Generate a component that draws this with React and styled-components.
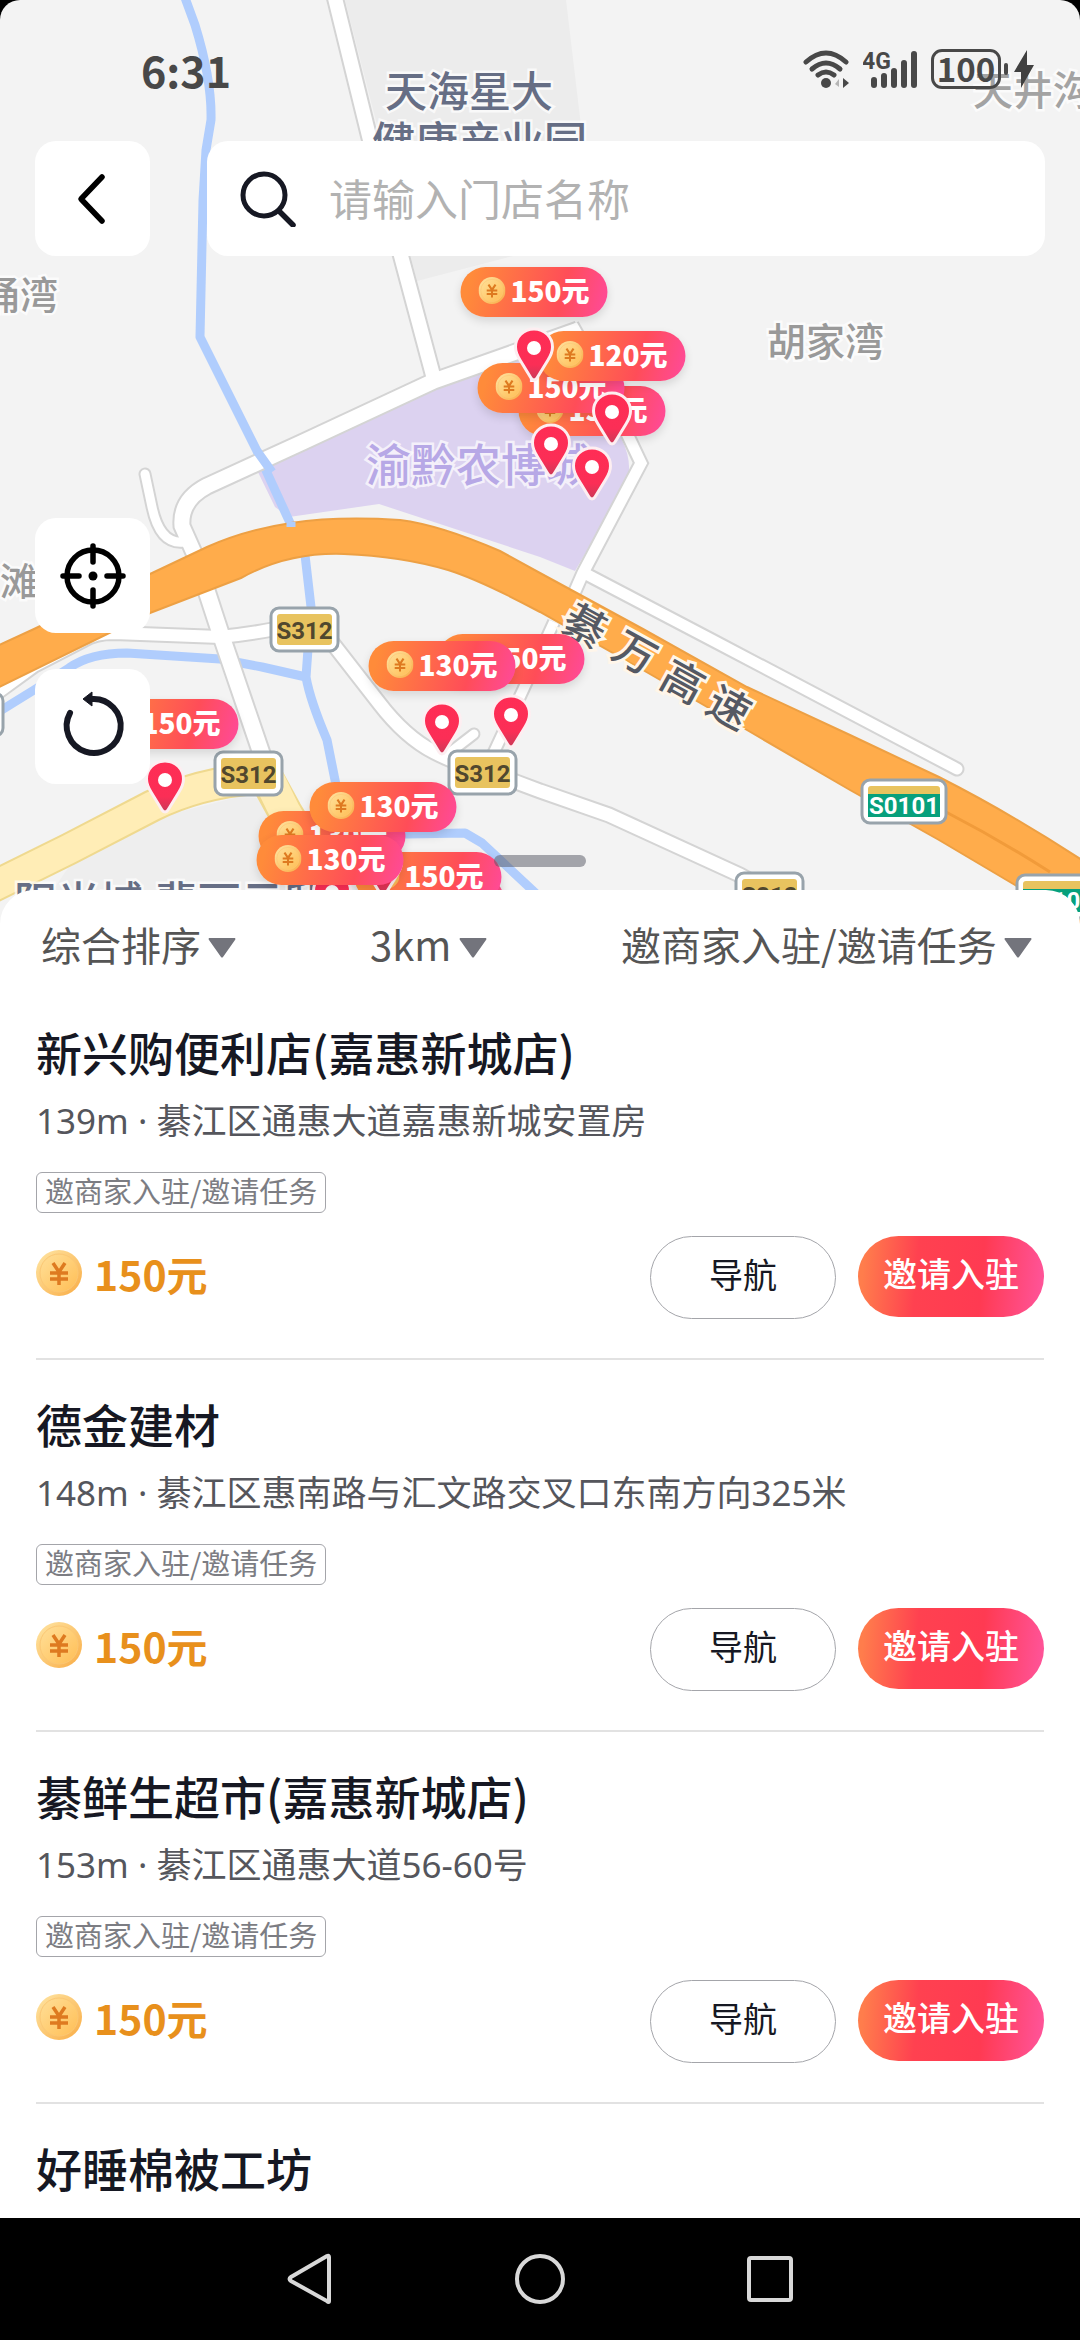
import { useState } from "react";
import styled, { createGlobalStyle } from "styled-components";

const GlobalStyle = createGlobalStyle`
  * {
    box-sizing: border-box;
  }
  body {
    margin: 0;
    background-color: black;
    font-family: "Noto Sans CJK SC", "Noto Sans", sans-serif;
  }
  button, input, select {
    font-family: inherit;
    padding: 0;
    margin: 0;
    border: none;
    background: none;
  }
  svg {
    display: block;
  }
`;

const Phone = styled.div`
  display: flex;
  flex-direction: column;
  height: 100vh;
  border-radius: 20px;
  overflow: hidden;
`;

/* ---------- map ---------- */

const MapArea = styled.section`
  position: relative;
  flex: none;
  height: 924px;
  background-color: #f3f3f3;
  overflow: hidden;
`;

const MapCanvas = styled.svg`
  position: absolute;
  inset: 0;
  width: 100%;
  height: 100%;
`;

const Marker = styled.button`
  position: absolute;
  left: calc(50% - 540px + ${(props) => props.$x}px);
  top: ${(props) => props.$y}px;
  transform: translateX(-50%);
  display: flex;
  flex-direction: column;
  align-items: center;
  gap: 10px;
  cursor: pointer;
`;

const Pill = styled.span`
  display: flex;
  align-items: center;
  justify-content: center;
  gap: 5px;
  width: 147px;
  height: 50px;
  padding-bottom: 4px;
  border-radius: 25px;
  color: white;
  font-size: 28px;
  line-height: 38px;
  font-weight: 900;
  background: linear-gradient(105deg, #ff8b3a 8%, #ff4d58 68%, #ff4a9c 100%);
  box-shadow: 0 4px 10px rgba(0, 0, 0, 0.12);
`;

const Overlay = styled.div`
  position: relative;
  display: flex;
  flex-direction: column;
  height: 890px;
  pointer-events: none;
`;

const StatusBar = styled.div`
  display: flex;
  align-items: center;
  justify-content: space-between;
  height: 141px;
  padding: 0 46px 4px 141px;
  color: #484848;
`;

const Time = styled.span`
  font-size: 43px;
  line-height: 60px;
  font-weight: 700;
`;

const StatusIcons = styled.div`
  display: flex;
  align-items: center;
  gap: 14px;
`;

const Battery = styled.span`
  width: 70px;
  height: 40px;
  border: 3px solid #484848;
  border-radius: 11px;
  font-size: 33px;
  line-height: 32px;
  font-weight: 700;
  text-align: center;
`;

const BatteryGroup = styled.div`
  display: flex;
  align-items: center;
  gap: 3px;
`;

const TopBar = styled.div`
  display: flex;
  gap: 57px;
  padding: 0 35px;
`;

const SquareButton = styled.button`
  flex: none;
  display: flex;
  align-items: center;
  justify-content: center;
  width: 115px;
  height: 115px;
  border-radius: 21px;
  background-color: white;
  cursor: pointer;
  pointer-events: auto;
`;

const SearchBox = styled.label`
  flex: 1;
  display: flex;
  align-items: center;
  gap: 33px;
  height: 115px;
  padding: 0 33px;
  border-radius: 21px;
  background-color: white;
  pointer-events: auto;
`;

const SearchInput = styled.input`
  flex: 1;
  min-width: 0;
  height: 64px;
  padding-bottom: 4px;
  outline: none;
  color: #161823;
  font-size: 43px;
  line-height: 60px;
  &::placeholder {
    color: #b2b2b2;
    opacity: 1;
  }
`;

const MapTools = styled.div`
  display: flex;
  flex-direction: column;
  gap: 36px;
  margin-top: 262px;
  padding-left: 35px;
`;

const Handle = styled.span`
  align-self: center;
  width: 92px;
  height: 12px;
  margin-top: auto;
  margin-bottom: 23px;
  border-radius: 6px;
  background-color: rgba(84, 86, 98, 0.5);
`;

/* ---------- list ---------- */

const Sheet = styled.main`
  position: relative;
  flex: 1;
  min-height: 0;
  margin-top: -34px;
  border-radius: 34px 34px 0 0;
  background-color: white;
  overflow: hidden;
`;

const Filters = styled.div`
  display: flex;
  align-items: center;
  justify-content: space-between;
  height: 98px;
  padding: 18px 48px 0 41px;
`;

const FilterLabel = styled.label`
  display: flex;
  align-items: center;
  gap: 7px;
`;

const FilterSelect = styled.select`
  appearance: none;
  padding-bottom: 8px;
  color: #555;
  font-size: 40px;
  line-height: 58px;
  cursor: pointer;
`;

const Stores = styled.ul`
  margin: 0;
  padding: 0 36px;
  list-style: none;
`;

const StoreItem = styled.li`
  padding: 36px 0 39px;
  border-bottom: 2px solid #e2e2e2;
`;

const StoreName = styled.h2`
  margin: 0;
  color: #161823;
  font-size: 46px;
  line-height: 54px;
  font-weight: 500;
`;

const StoreMeta = styled.p`
  margin: 21px 0 0;
  color: #55565c;
  font-family: "Noto Sans", "Noto Sans CJK SC", sans-serif;
  font-size: 35px;
  line-height: 44px;
`;

const Tag = styled.span`
  display: block;
  width: fit-content;
  height: 41px;
  margin-top: 29px;
  padding: 0 8px;
  border: 1px solid #a4a5aa;
  border-radius: 6px;
  color: #7c7d83;
  font-size: 29px;
  line-height: 34px;
`;

const StoreFooter = styled.div`
  display: flex;
  align-items: flex-start;
  gap: 22px;
  height: 83px;
  margin-top: 23px;
`;

const Price = styled.span`
  display: flex;
  align-items: center;
  gap: 12px;
  height: 74px;
  margin-right: auto;
  color: #e8901c;
  font-size: 41px;
  line-height: 58px;
  font-weight: 700;
`;

const ActionButton = styled.button`
  width: 186px;
  height: ${(props) => (props.$primary ? 81 : 83)}px;
  padding-bottom: 8px;
  border: ${(props) => (props.$primary ? "none" : "1px solid #a4a5aa")};
  border-radius: 42px;
  color: ${(props) => (props.$primary ? "white" : "#161823")};
  background: ${(props) =>
    props.$primary
      ? "linear-gradient(95deg, #ff7d4c 4%, #ff4150 32%, #ff3a52 66%, #ff559c 100%)"
      : "white"};
  font-size: 34px;
  line-height: 50px;
  font-weight: ${(props) => (props.$primary ? 500 : 400)};
  cursor: pointer;
`;

const NavBar = styled.nav`
  flex: none;
  display: flex;
  align-items: center;
  justify-content: center;
  gap: 176px;
  height: 122px;
  background-color: black;
`;

const NavButton = styled.button`
  width: 54px;
  height: 54px;
  cursor: pointer;
`;

/* ---------- icons ---------- */

const Coin = ({ size }) => (
  <svg width={size} height={size} viewBox="0 0 46 46">
    <defs>
      <linearGradient id="coinEdge" x1="0" y1="0" x2="1" y2="1">
        <stop offset="0" stopColor="#ffe6a4" />
        <stop offset="1" stopColor="#f9ac45" />
      </linearGradient>
      <linearGradient id="coinFace" x1="0" y1="0" x2="1" y2="1">
        <stop offset="0" stopColor="#ffdf98" />
        <stop offset="1" stopColor="#ffbe55" />
      </linearGradient>
    </defs>
    <circle cx="23" cy="23" r="23" fill="url(#coinEdge)" />
    <circle cx="23" cy="23" r="19" fill="url(#coinFace)" stroke="#fbc774" />
    <path
      d="M17 13l6 9 6-9M14 23h18M14 29h18M23 22v13"
      fill="none"
      stroke="#de7a20"
      strokeWidth="3.500"
    />
  </svg>
);

const PinIcon = () => (
  <svg width="41" height="56" viewBox="0 0 41 56">
    <defs>
      <linearGradient id="pin" x1="0" y1="0" x2="0" y2="1">
        <stop offset="0" stopColor="#ff2d55" />
        <stop offset="0.7" stopColor="#fb2e56" />
        <stop offset="1" stopColor="#c93a58" />
      </linearGradient>
    </defs>
    <path
      d="M20.500 2C10 2 2 10 2 20c0 5 2 9 4.500 13l11 18c1.500 2.500 4.500 2.500 6 0l11-18C37 29 39 25 39 20 39 10 31 2 20.500 2z"
      fill="url(#pin)"
      stroke="#fdeef1"
      strokeWidth="3"
    />
    <circle cx="20.500" cy="21" r="7" fill="white" />
  </svg>
);

const Triangle = () => (
  <svg width="28" height="22" viewBox="0 0 28 22">
    <path d="M1 1h26q1 1 0 2L15 20q-1 1-2 0L1 3q-1-1 0-2z" fill="#73747c" />
  </svg>
);

const BackIcon = () => (
  <svg width="32" height="54" viewBox="0 0 32 54">
    <path
      d="M25 5L4 27l21 22"
      fill="none"
      stroke="black"
      strokeWidth="5.500"
      strokeLinecap="round"
      strokeLinejoin="round"
    />
  </svg>
);

const SearchIcon = () => (
  <svg width="56" height="56" viewBox="0 0 56 56">
    <circle cx="24" cy="24" r="21" fill="none" stroke="#161823" strokeWidth="5" />
    <path d="M39 40l14 14" stroke="#161823" strokeWidth="5.500" strokeLinecap="round" />
  </svg>
);

const LocateIcon = () => (
  <svg width="68" height="68" viewBox="0 0 68 68">
    <g fill="none" stroke="black" strokeWidth="5.500" strokeLinecap="round">
      <circle cx="34" cy="34" r="26" />
      <path d="M34 4v16M34 48v16M4 34h16M48 34h16" />
    </g>
    <circle cx="34" cy="34" r="4.500" fill="black" />
  </svg>
);

const RefreshIcon = () => (
  <svg width="68" height="74" viewBox="0 0 68 74">
    <path
      d="M11 23a27 27 0 1 0 22-14"
      fill="none"
      stroke="#161823"
      strokeWidth="6"
      strokeLinecap="round"
    />
    <path d="M24 9l9-7v14z" fill="#161823" stroke="#161823" strokeLinejoin="round" />
  </svg>
);

const WifiIcon = () => (
  <svg width="46" height="38" viewBox="0 0 46 38">
    <g fill="none" stroke="#484848" strokeWidth="5" strokeLinecap="round">
      <path d="M3 12q20-18 40 0" />
      <path d="M9 19q14-12 28 0" />
      <path d="M15 25q8-6 16 0" />
    </g>
    <circle cx="23" cy="33" r="5" fill="#484848" />
    <path d="M40 28l6 5-6 5z" fill="#484848" />
    <path d="M36 29v8l-4-3z" fill="#b5b5b5" />
  </svg>
);

const SignalIcon = () => (
  <svg width="54" height="38" viewBox="0 0 54 38">
    <text x="-1" y="19" fontSize="23" fontWeight="700" fill="#484848" fontFamily="Roboto">
      4G
    </text>
    <path
      d="M11 30v5M21 26v9M31 21v14M41 13v22M51 4v31"
      stroke="#484848"
      strokeWidth="6"
      strokeLinecap="round"
    />
  </svg>
);

const BoltIcon = () => (
  <svg width="20" height="38" viewBox="0 0 20 38">
    <path d="M13 0v15h7L7 38V22H0z" fill="#404040" />
  </svg>
);

/* ---------- map drawing ---------- */

const whiteRoads = [
  { d: "M333-10L370 140 434 379", w: 14 },
  { d: "M578 330L434 381 303 442 207 486Q180 500 182 526L198 562", w: 15 },
  { d: "M145 474L152 507Q160 545 184 542", w: 9, round: true },
  { d: "M205 586L220 632 262 755", w: 16 },
  { d: "M-10 698L34 666 84 640Q95 633 114 633L220 637Q250 634 275 629L320 624", w: 12 },
  { d: "M330 640L379 703Q405 737 434 752T516 782L540 791 609 815 740 875 820 920", w: 13 },
  { d: "M474 734L448 754", w: 9, round: true },
  { d: "M554 622L523 690 488 765", w: 10 },
  { d: "M586 574L712 640 957 769", w: 11, round: true },
  { d: "M572 325L592 360 641 463 583 573 572 598", w: 11 },
];

const rivers = [
  "M184-5L195 25Q212 80 211 120L206 150 203 200 200 337 258 453 291 525",
  "M305 555L311 607 306 677Q310 700 327 740L337 790Q360 834 406 834L465 833 482 843 575 930",
  "M-5 714L34 690 69 668Q90 653 127 653L220 659 262 667 306 677",
];

const places = [
  { t: "天海星大", x: 385, y: 107, size: 42, color: "#666e85" },
  { t: "健康产业园", x: 372, y: 158, size: 43, color: "#666e85" },
  { t: "涌湾", x: -18, y: 309, size: 38, color: "#999" },
  { t: "滩", x: 0, y: 595, size: 38, color: "#999" },
  { t: "天井沟", x: 973, y: 105, size: 40, color: "#a3a3a3" },
  { t: "胡家湾", x: 767, y: 356, size: 39, color: "#999" },
  { t: "渝黔农博城", x: 366, y: 482, size: 45, color: "#b7a8e6" },
  { t: "阳光城·翡丽云邸", x: 14, y: 918, size: 43, color: "#666e85" },
];

const highwayName = [
  { t: "綦", x: 585, y: 626 },
  { t: "万", x: 635, y: 653 },
  { t: "高", x: 683, y: 682 },
  { t: "速", x: 729, y: 708 },
];

const Shield = ({ x, y, name, express }) => {
  const w = express ? 84 : 67;
  return (
    <g transform={`translate(${x} ${y})`}>
      <rect width={w} height="43" rx="8" fill="white" stroke="#98a3ab" strokeWidth="3" />
      <rect x="6" y="6" width={w - 12} height="31" rx="3" fill="#e8c35f" />
      {express && <path d={`M6 14h${w - 12}v23h-${w - 12}z`} fill="#07a07c" />}
      <text
        x={w / 2}
        y={express ? 34 : 31}
        textAnchor="middle"
        fontFamily="Roboto"
        fontSize="24"
        fontWeight="700"
        fill={express ? "white" : "#50472e"}
      >
        {name}
      </text>
    </g>
  );
};

const CityMap = () => (
  <MapCanvas viewBox="0 0 1080 924" preserveAspectRatio="xMidYMin slice">
    <path d="M345 0H566L594 235 417 281z" fill="#ececec" />
    <path d="M30 924L70 865 155 818 238 797 290 800 310 924z" fill="#eee" />
    <path
      d="M255 466L475 372 578 335 600 390 622 440Q632 460 628 480L575 571 540 557 379 504 289 517 275 507z"
      fill="#dcd2f0"
    />
    <g fill="none" stroke="#b0cdfd" strokeWidth="9" strokeLinejoin="round">
      {rivers.map((d) => (
        <path key={d} d={d} />
      ))}
    </g>
    <g fill="none">
      <path d="M262 770L285 812 320 870" stroke="#efd98f" strokeWidth="35" />
      <path d="M-20 893L69 849 152 806Q200 782 262 778" stroke="#efd98f" strokeWidth="33" />
      <path d="M262 765L285 812 320 870" stroke="#ffedb6" strokeWidth="31" />
      <path d="M-20 893L69 849 152 806Q200 782 262 778" stroke="#ffedb6" strokeWidth="29" />
    </g>
    <g fill="none">
      {whiteRoads.map((road) => (
        <path
          key={road.d}
          d={road.d}
          stroke="#d4d4d4"
          strokeWidth={road.w + 4}
          strokeLinecap={road.round ? "round" : "butt"}
        />
      ))}
      {whiteRoads.map((road) => (
        <path
          key={road.d}
          d={road.d}
          stroke="white"
          strokeWidth={road.w}
          strokeLinecap={road.round ? "round" : "butt"}
        />
      ))}
    </g>
    <path
      d="M-5 647L34 629 150 574 207 547Q245 530 291 523T400 520Q440 525 500 551L540 573 643 629 747 687 850 735 939 777Q1010 813 1085 862V930L1015 885 939 840 850 790 747 730 643 670 540 612Q480 580 448 570Q400 556 344 554T241 578L150 613-5 689z"
      fill="#ffac4b"
      stroke="#eda044"
      strokeWidth="2"
    />
    <path d="M946 812Q1000 840 1050 872" fill="none" stroke="#f19b3a" strokeWidth="3" />
    <path d="M257 451L272 472M291 522v5" stroke="#b0cdfd" strokeWidth="9" />
    {places.map((p) => (
      <text
        key={p.t}
        x={p.x}
        y={p.y}
        fontFamily='"Noto Sans", "Noto Sans CJK SC", sans-serif'
        fontSize={p.size}
        fontWeight="500"
        fill={p.color}
        stroke="white"
        strokeOpacity="0.7"
        strokeWidth="5"
        paintOrder="stroke"
      >
        {p.t}
      </text>
    ))}
    {highwayName.map((c) => (
      <text
        key={c.t}
        transform={`translate(${c.x} ${c.y}) rotate(29)`}
        y="15"
        textAnchor="middle"
        fontSize="42"
        fontWeight="500"
        fill="#555963"
        stroke="#fff6ea"
        strokeWidth="6"
        paintOrder="stroke"
      >
        {c.t}
      </text>
    ))}
    <Shield x={-64} y={693} name="S312" />
    <Shield x={271} y={608} name="S312" />
    <Shield x={215} y={752} name="S312" />
    <Shield x={449} y={751} name="S312" />
    <Shield x={736} y={873} name="S312" />
    <Shield x={862} y={780} name="S0101" express />
    <Shield x={1017} y={875} name="S0101" express />
  </MapCanvas>
);

const markers = [
  { x: 592, y: 386, price: 150 },
  { x: 551, y: 363, price: 150 },
  { x: 612, y: 331, price: 120 },
  { x: 534, y: 267, price: 150 },
  { x: 511, y: 634, price: 150 },
  { x: 442, y: 641, price: 130 },
  { x: 165, y: 699, price: 150 },
  { x: 431, y: 876, price: 150 },
  { x: 428, y: 852, price: 150 },
  { x: 332, y: 811, price: 130 },
  { x: 383, y: 782, price: 130 },
  { x: 330, y: 835, price: 130 },
];

const stores = [
  { name: "新兴购便利店(嘉惠新城店)", distance: "139m", address: "綦江区通惠大道嘉惠新城安置房", price: 150 },
  { name: "德金建材", distance: "148m", address: "綦江区惠南路与汇文路交叉口东南方向325米", price: 150 },
  { name: "綦鲜生超市(嘉惠新城店)", distance: "153m", address: "綦江区通惠大道56-60号", price: 150 },
  { name: "好睡棉被工坊" },
];

const filters = [
  { label: "排序", value: "综合排序" },
  { label: "距离", value: "3km" },
  { label: "任务", value: "邀商家入驻/邀请任务" },
];

const Store = ({ store }) => (
  <StoreItem>
    <StoreName>{store.name}</StoreName>
    {store.address && (
      <>
        <StoreMeta>
          {store.distance} · {store.address}
        </StoreMeta>
        <Tag>邀商家入驻/邀请任务</Tag>
        <StoreFooter>
          <Price>
            <Coin size={46} />
            {store.price}元
          </Price>
          <ActionButton>导航</ActionButton>
          <ActionButton $primary>邀请入驻</ActionButton>
        </StoreFooter>
      </>
    )}
  </StoreItem>
);

const App = () => {
  const [keyword, setKeyword] = useState("");

  return (
    <>
      <GlobalStyle />
      <Phone>
        <MapArea>
          <CityMap />
          {markers.map((m) => (
            <Marker key={`${m.x}-${m.y}`} $x={m.x} $y={m.y}>
              <Pill>
                <Coin size={27} />
                {m.price}元
              </Pill>
              <PinIcon />
            </Marker>
          ))}
          <Overlay>
            <StatusBar>
              <Time>6:31</Time>
              <StatusIcons>
                <WifiIcon />
                <SignalIcon />
                <BatteryGroup>
                  <Battery>100</Battery>
                  <svg width="4" height="12">
                    <rect width="4" height="12" rx="2" fill="#484848" />
                  </svg>
                  <span />
                  <BoltIcon />
                </BatteryGroup>
              </StatusIcons>
            </StatusBar>
            <TopBar>
              <SquareButton aria-label="返回">
                <BackIcon />
              </SquareButton>
              <SearchBox>
                <SearchIcon />
                <SearchInput
                  aria-label="门店名称"
                  placeholder="请输入门店名称"
                  value={keyword}
                  onChange={(e) => setKeyword(e.target.value)}
                />
              </SearchBox>
            </TopBar>
            <MapTools>
              <SquareButton aria-label="定位">
                <LocateIcon />
              </SquareButton>
              <SquareButton aria-label="刷新">
                <RefreshIcon />
              </SquareButton>
            </MapTools>
            <Handle />
          </Overlay>
        </MapArea>

        <Sheet>
          <Filters>
            {filters.map((f) => (
              <FilterLabel key={f.label}>
                <FilterSelect aria-label={f.label}>
                  <option>{f.value}</option>
                </FilterSelect>
                <Triangle />
              </FilterLabel>
            ))}
          </Filters>
          <Stores>
            {stores.map((s) => (
              <Store key={s.name} store={s} />
            ))}
          </Stores>
        </Sheet>

        <NavBar>
          <NavButton aria-label="后退">
            <svg width="54" height="54" fill="none" stroke="#d8d8d8" strokeWidth="4">
              <path d="M46 5v44q0 2-2 0L8 29q-3-2 0-4L44 4q2-1 2 1z" />
            </svg>
          </NavButton>
          <NavButton aria-label="主页">
            <svg width="54" height="54" fill="none" stroke="#d8d8d8" strokeWidth="4">
              <circle cx="27" cy="27" r="23" />
            </svg>
          </NavButton>
          <NavButton aria-label="最近任务">
            <svg width="54" height="54" fill="none" stroke="#d8d8d8" strokeWidth="4">
              <rect x="6" y="6" width="42" height="42" rx="2" />
            </svg>
          </NavButton>
        </NavBar>
      </Phone>
    </>
  );
};

export default App;
